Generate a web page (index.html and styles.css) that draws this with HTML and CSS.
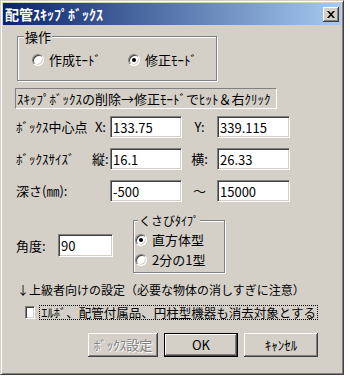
FILE: index.html
```html
<!DOCTYPE html>
<html lang="ja">
<head>
    <meta charset="UTF-8">
    <title>配管スキップボックス</title>
    <link rel="stylesheet" href="styles.css">
</head>
<body>
    <div class="window">
        <div class="titlebar">
            <span class="title">配管ｽｷｯﾌﾟﾎﾞｯｸｽ</span>
            <button class="close-btn" aria-label="閉じる">
                <svg width="8" height="7" viewBox="0 0 8 7">
                    <path d="M0 0h2l2 2.2L6 0h2L5 3.5 8 7H6L4 4.8 2 7H0l3-3.5z" fill="#000"/>
                </svg>
            </button>
        </div>
        <div class="content">
            <div class="group ops">
                <span class="group-title">操作</span>
                <div class="radio-row">
                    <label class="radio first"><span class="dot"></span>作成ﾓｰﾄﾞ</label>
                    <label class="radio checked"><span class="dot"></span>修正ﾓｰﾄﾞ</label>
                </div>
            </div>

            <div class="hint">ｽｷｯﾌﾟﾎﾞｯｸｽの削除→修正ﾓｰﾄﾞでﾋｯﾄ＆右ｸﾘｯｸ</div>

            <div class="fields">
                <span class="lbl">ﾎﾞｯｸｽ中心点</span>
                <span class="axis">X:</span>
                <input class="edit" type="text" value="133.75">
                <span class="axis2">Y:</span>
                <input class="edit" type="text" value="339.115">

                <span class="lbl">ﾎﾞｯｸｽｻｲｽﾞ</span>
                <span class="axis">縦:</span>
                <input class="edit" type="text" value="16.1">
                <span class="axis2">横:</span>
                <input class="edit" type="text" value="26.33">

                <span class="lbl span2">深さ(㎜):</span>
                <input class="edit" type="text" value="-500">
                <span class="axis2">～</span>
                <input class="edit" type="text" value="15000">
            </div>

            <div class="lower">
                <div class="angle">
                    <span class="angle-lbl">角度:</span>
                    <input class="edit angle-edit" type="text" value="90">
                </div>
                <div class="group wedge">
                    <span class="group-title">くさびﾀｲﾌﾟ</span>
                    <label class="radio checked"><span class="dot"></span>直方体型</label>
                    <label class="radio"><span class="dot"></span>2分の1型</label>
                </div>
            </div>

            <div class="advanced">↓上級者向けの設定（必要な物体の消しすぎに注意）</div>

            <label class="check">
                <span class="box"></span>
                <span class="focus">ｴﾙﾎﾞ、配管付属品、円柱型機器も消去対象とする</span>
            </label>

            <div class="buttons">
                <button class="btn small" disabled>ﾎﾞｯｸｽ設定</button>
                <button class="btn default">OK</button>
                <button class="btn">ｷｬﾝｾﾙ</button>
            </div>
        </div>
    </div>
</body>
</html>
```
FILE: styles.css
```css
body {
    margin: 0;
    background: #fff;
    font-family: "Noto Sans CJK JP", sans-serif;
    font-size: 13px;
    color: #000;
}
.window {
    width: 344px;
    height: 375px;
    box-sizing: border-box;
    background: #d4d0c8;
    border: 1px solid;
    border-color: #d4d0c8 #404040 #404040 #d4d0c8;
    box-shadow: inset 1px 1px #fff, inset -1px -1px #808080;
    padding: 2px;
}
.titlebar {
    height: 22px;
    display: flex;
    align-items: center;
    justify-content: space-between;
    padding: 0 2px;
    background: linear-gradient(to right, #0a246a, #a6caf0);
}
.title {
    color: #fff;
    font-weight: bold;
    font-size: 14px;
    line-height: 16px;
}
.close-btn {
    width: 16px;
    height: 15px;
    padding: 0;
    border: none;
    background: #d4d0c8;
    box-shadow: inset -1px -1px #404040, inset 1px 1px #fff, inset -2px -2px #808080;
    display: flex;
    align-items: center;
    justify-content: center;
}
.content {
    padding: 0 23px 0 12px;
    line-height: 16px;
}

/* group boxes */
.group {
    position: relative;
    box-sizing: border-box;
    border: 1px solid #808080;
    box-shadow: inset 1px 1px #fff, 1px 1px #fff;
}
.group-title {
    position: absolute;
    top: -8px;
    background: #d4d0c8;
    padding: 0 1px;
}
.ops {
    margin: 11px 0 0 2px;
    width: 200px;
    height: 45px;
    padding: 15px 0 0 14px;
}
.ops .group-title {
    left: 6px;
}
.radio-row {
    display: flex;
}
.radio {
    display: flex;
    align-items: center;
    gap: 5px;
    height: 16px;
}
.radio.first {
    width: 96px;
}
.dot {
    width: 12px;
    height: 12px;
    box-sizing: border-box;
    border-radius: 50%;
    background: #fff;
    border: 1px solid;
    border-color: #808080 #fff #fff #808080;
    box-shadow: inset 1px 1px #404040, inset -1px -1px #d4d0c8;
    display: flex;
    align-items: center;
    justify-content: center;
}
.checked .dot::after {
    content: "";
    width: 4px;
    height: 4px;
    border-radius: 50%;
    background: #000;
}

.hint {
    margin-top: 7px;
    width: 262px;
    height: 21px;
    box-sizing: border-box;
    border: 1px solid;
    border-color: #808080 #fff #fff #808080;
    padding: 1px 1px 0;
    line-height: 18px;
    white-space: nowrap;
}

/* edit rows */
.fields {
    margin: 7px 0 0 1px;
    display: grid;
    grid-template-columns: 76px 18px 72px 35px 73px;
    grid-auto-rows: 22px;
    row-gap: 10px;
    align-items: center;
}
.lbl {
    white-space: nowrap;
}
.span2 {
    grid-column: span 2;
}
.axis {
    text-align: right;
    padding-right: 4px;
    white-space: nowrap;
}
.axis2 {
    text-align: center;
}
.edit {
    box-sizing: border-box;
    height: 22px;
    width: 100%;
    margin: 0;
    padding: 0 2px;
    font: inherit;
    background: #fff;
    border: 1px solid;
    border-color: #808080 #fff #fff #808080;
    box-shadow: inset 1px 1px #404040, inset -1px -1px #d4d0c8;
    outline: none;
}

.lower {
    margin: 18px 0 0 1px;
    display: flex;
    align-items: flex-start;
}
.angle {
    display: flex;
    align-items: center;
    margin-top: 14px;
    width: 117px;
}
.angle-lbl {
    width: 42px;
}
.angle-edit {
    width: 55px;
    height: 23px;
}
.wedge {
    width: 92px;
    height: 53px;
    padding: 11px 0 0 1px;
    display: flex;
    flex-direction: column;
    gap: 4px;
}
.wedge .group-title {
    left: 4px;
    font-size: 12px;
}

.advanced {
    margin: 10px 0 0 2px;
    font-size: 12px;
    line-height: 14px;
    white-space: nowrap;
}
.check {
    margin: 8px 0 0 10px;
    display: flex;
    align-items: center;
    gap: 4px;
    height: 15px;
}
.box {
    width: 13px;
    height: 13px;
    box-sizing: border-box;
    background: #fff;
    border: 1px solid;
    border-color: #808080 #fff #fff #808080;
    box-shadow: inset 1px 1px #404040, inset -1px -1px #d4d0c8;
}
.focus {
    border: 1px dotted #000;
    padding: 0 1px;
    font-size: 12.5px;
    line-height: 13px;
    white-space: nowrap;
}

.buttons {
    margin-top: 13px;
    display: flex;
    justify-content: flex-end;
    gap: 6px;
}
.btn {
    width: 74px;
    height: 24px;
    padding: 0;
    font: inherit;
    color: #000;
    background: #d4d0c8;
    border: none;
    box-shadow: inset -1px -1px #404040, inset 1px 1px #fff, inset -2px -2px #808080;
}
.btn.small {
    width: 70px;
}
.btn:disabled {
    color: #808080;
    text-shadow: 1px 1px #fff;
}
.btn.default {
    border: 1px solid #000;
}
```
